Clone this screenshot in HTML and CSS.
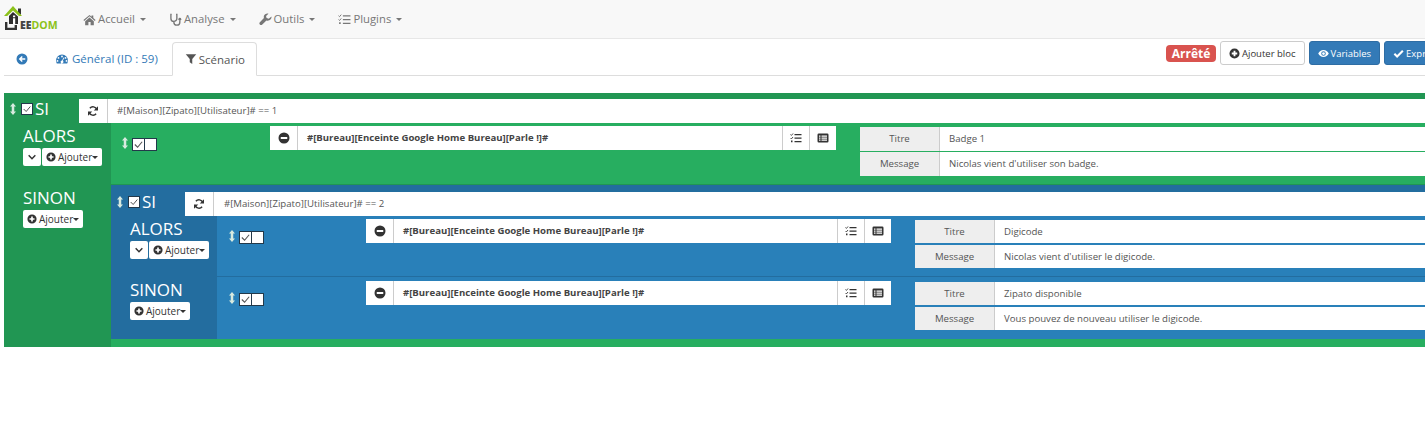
FILE: index.html
```html
<!DOCTYPE html>
<html>
<head>
	<meta charset="UTF-8">
	<title>Scénario</title>
	<link rel="stylesheet" href="styles.css">
</head>
<body>
<svg class="defs" width="0" height="0">
	<symbol id="i-home" viewBox="0 0 24 24"><path d="M12 3.500 .8 13l1.400 1.600L12 6.200l9.800 8.400 1.400-1.600L19 9.400V4.500h-3.200v2.200zM4 15v7.500h6v-6h4v6h6V15L12 8.200z"/></symbol>
	<symbol id="i-steth" viewBox="0 0 24 24"><path d="M5 2.500H3.500V10a5.500 5.500 0 0 0 11 0V2.500H13M9 15.500V17a5.500 5.500 0 0 0 11 0v-3" fill="none" stroke="currentColor" stroke-width="2.500"/><circle cx="20" cy="11.500" r="2.600"/></symbol>
	<symbol id="i-wrench" viewBox="0 0 24 24"><path d="M23 6.500 18 10.500l-4-1.200L13 5.500 17.500 1.200C14 .3 10 2 9 5.500c-.4 1.400-.3 2.700.1 3.900L1.600 17c-1.200 1.200-1.200 3.200 0 4.400 1.200 1.300 3.200 1.300 4.500 0l7.600-7.600c1.300.4 2.700.5 4 .1 3.500-1 6.200-4.300 5.300-7.400z"/></symbol>
	<symbol id="i-tasks" viewBox="0 0 24 24"><path d="M9 4h14v2.500H9zM9 11h14v2.500H9zM9 18h14v2.500H9z"/><path d="M1 5l1.800 1.800L6 3M1 12l1.800 1.800L6 10" fill="none" stroke="currentColor" stroke-width="1.800"/><path d="M2 17h3v3.500H2z"/></symbol>
	<symbol id="i-back" viewBox="0 0 24 24"><path fill-rule="evenodd" d="M12 1a11 11 0 1 0 0 22 11 11 0 0 0 0-22zM5.500 12l6-6 2 2-2.500 2.500h7.500v3H11l2.500 2.500-2 2z"/></symbol>
	<symbol id="i-gauge" viewBox="0 0 24 24"><path fill-rule="evenodd" d="M12 3A12 12 0 0 0 0 15c0 2.200.6 4.300 1.600 6h20.800c1-1.700 1.600-3.800 1.600-6A12 12 0 0 0 12 3zM12 5.200a1.800 1.800 0 1 1 0 3.600 1.800 1.800 0 0 1 0-3.600zM5 8a1.800 1.800 0 1 1 0 3.600A1.800 1.800 0 0 1 5 8zm14 0a1.800 1.800 0 1 1 0 3.600A1.800 1.800 0 0 1 19 8zM3 14a1.800 1.800 0 1 1 0 3.600A1.800 1.800 0 0 1 3 14zm18 0a1.800 1.800 0 1 1 0 3.600 1.800 1.800 0 0 1 0-3.600zM15 9l1.500.6-2.700 6.100a2.800 2.800 0 1 1-1.600-.6z"/></symbol>
	<symbol id="i-filter" viewBox="0 0 24 24"><path d="M1.500 2.500h21L14.500 12v10l-5-3.500V12z"/></symbol>
	<symbol id="i-plus" viewBox="0 0 24 24"><path fill-rule="evenodd" d="M12 1a11 11 0 1 0 0 22 11 11 0 0 0 0-22zM10 6h4v4h4v4h-4v4h-4v-4H6v-4h4z"/></symbol>
	<symbol id="i-minus" viewBox="0 0 24 24"><path fill-rule="evenodd" d="M12 1a11 11 0 1 0 0 22 11 11 0 0 0 0-22zM5.500 10h13v4h-13z"/></symbol>
	<symbol id="i-eye" viewBox="0 0 24 24"><path fill-rule="evenodd" d="M12 4.500C7 4.500 3 7.500.5 12 3 16.500 7 19.500 12 19.500s9-3 11.500-7.500C21 7.500 17 4.500 12 4.500zM12 7a5 5 0 1 1 0 10 5 5 0 0 1 0-10z"/><circle cx="12" cy="12" r="3"/></symbol>
	<symbol id="i-check" viewBox="0 0 24 24"><path d="M3 12.500l6 6L21.500 6" fill="none" stroke="currentColor" stroke-width="4.500"/></symbol>
	<symbol id="i-tick" viewBox="0 0 24 24"><path d="M4 12l6 6L20 6" fill="none" stroke="currentColor" stroke-width="2.400"/></symbol>
	<symbol id="i-refresh" viewBox="0 0 24 24"><path d="M19.500 9A8 8 0 0 0 5.800 6.500M4.500 15a8 8 0 0 0 13.700 2.500" fill="none" stroke="currentColor" stroke-width="3"/><path d="M22 2.500V11h-8.500zM2 21.500V13h8.500z"/></symbol>
	<symbol id="i-chevron" viewBox="0 0 24 24"><path d="M4 8l8 8 8-8" fill="none" stroke="currentColor" stroke-width="3.600"/></symbol>
	<symbol id="i-updown" viewBox="0 0 12 24"><path d="M6 0l6 7H8.500v10H12l-6 7-6-7h3.500V7H0z"/></symbol>
	<symbol id="i-list" viewBox="0 0 24 24"><path fill-rule="evenodd" d="M3.500 3h17A2.500 2.500 0 0 1 23 5.500v13a2.500 2.500 0 0 1-2.500 2.500h-17A2.500 2.500 0 0 1 1 18.500v-13A2.500 2.500 0 0 1 3.500 3zM4 7v2.500h3V7zm5 0v2.500h11V7zm-5 4v2.500h3V11zm5 0v2.500h11V11zm-5 4v2.500h3V15zm5 0v2.500h11V15z"/></symbol>
</svg>

<nav class="navbar">
	<a class="logo">
		<svg class="logo-house" viewBox="0 0 20 24">
			<path d="M14 2.500h3v6h-3z" fill="#333"/>
			<path d="M9 0 0 10h3.200L9 4.500l6 5.500h3z" fill="#8cc21a"/>
			<path d="M5 10 9 6l5 4.500V18H5z" fill="#2e2e2e"/>
			<path d="M9 9.500h2.200v1.800H9zM9 12.300h2.200v6H9z" fill="#fff"/>
			<path d="M1 16h2.400v5.800h7.200V19H13v5H1z" fill="#333"/>
		</svg>
		<span class="logo-text"><b>EE</b>DOM</span>
	</a>
	<a class="nav-item"><svg class="ico"><use href="#i-home"/></svg>Accueil<i class="caret"></i></a>
	<a class="nav-item"><svg class="ico"><use href="#i-steth"/></svg>Analyse<i class="caret"></i></a>
	<a class="nav-item"><svg class="ico"><use href="#i-wrench"/></svg>Outils<i class="caret"></i></a>
	<a class="nav-item"><svg class="ico"><use href="#i-tasks"/></svg>Plugins<i class="caret"></i></a>
</nav>

<div class="tabs">
	<a class="tab tab-back"><svg class="ico"><use href="#i-back"/></svg></a>
	<a class="tab"><svg class="ico"><use href="#i-gauge"/></svg>Général (ID : 59)</a>
	<a class="tab active"><svg class="ico"><use href="#i-filter"/></svg>Scénario</a>
	<div class="actions">
		<span class="badge">Arrêté</span>
		<a class="btn"><svg class="ico"><use href="#i-plus"/></svg>Ajouter bloc</a>
		<a class="btn btn-blue"><svg class="ico"><use href="#i-eye"/></svg>Variables</a>
		<a class="btn btn-blue"><svg class="ico"><use href="#i-check"/></svg>Expressions</a>
	</div>
</div>

<div class="scenario">
	<div class="block green">
		<div class="si-row">
			<div class="si-label">
				<svg class="updown"><use href="#i-updown"/></svg>
				<span class="cb on"><svg><use href="#i-tick"/></svg></span>
				<span class="si-txt">SI</span>
			</div>
			<a class="refresh"><svg class="ico"><use href="#i-refresh"/></svg></a>
			<div class="field">#[Maison][Zipato][Utilisateur]# == 1</div>
		</div>

		<div class="branch">
			<div class="branch-label">
				<div class="branch-name">ALORS</div>
				<div class="branch-btns">
					<a class="mini mini-toggle"><svg class="ico"><use href="#i-chevron"/></svg></a>
					<a class="mini"><svg class="ico"><use href="#i-plus"/></svg>Ajouter<i class="caret"></i></a>
				</div>
			</div>
			<div class="branch-body">
				<div class="action first">
					<div class="handle">
						<svg class="updown"><use href="#i-updown"/></svg>
						<span class="cb on"><svg><use href="#i-tick"/></svg></span><span class="cb"></span>
					</div>
					<div class="cmd">
						<a class="cmd-btn"><svg class="ico"><use href="#i-minus"/></svg></a>
						<div class="cmd-name">#[Bureau][Enceinte Google Home Bureau][Parle !]#</div>
						<a class="cmd-btn"><svg class="ico"><use href="#i-tasks"/></svg></a>
						<a class="cmd-btn"><svg class="ico"><use href="#i-list"/></svg></a>
					</div>
					<div class="params">
						<div class="param"><span class="param-key">Titre</span><span class="param-val">Badge 1</span></div>
						<div class="param"><span class="param-key">Message</span><span class="param-val">Nicolas vient d'utiliser son badge.</span></div>
					</div>
				</div>
			</div>
		</div>

		<div class="branch">
			<div class="branch-label">
				<div class="branch-name">SINON</div>
				<div class="branch-btns">
					<a class="mini"><svg class="ico"><use href="#i-plus"/></svg>Ajouter<i class="caret"></i></a>
				</div>
			</div>
			<div class="branch-body">
				<div class="block blue">
					<div class="si-row">
						<div class="si-label">
							<svg class="updown"><use href="#i-updown"/></svg>
							<span class="cb on"><svg><use href="#i-tick"/></svg></span>
							<span class="si-txt">SI</span>
						</div>
						<a class="refresh"><svg class="ico"><use href="#i-refresh"/></svg></a>
						<div class="field">#[Maison][Zipato][Utilisateur]# == 2</div>
					</div>

					<div class="branch">
						<div class="branch-label">
							<div class="branch-name">ALORS</div>
							<div class="branch-btns">
								<a class="mini mini-toggle"><svg class="ico"><use href="#i-chevron"/></svg></a>
								<a class="mini"><svg class="ico"><use href="#i-plus"/></svg>Ajouter<i class="caret"></i></a>
							</div>
						</div>
						<div class="branch-body">
							<div class="action">
								<div class="handle">
									<svg class="updown"><use href="#i-updown"/></svg>
									<span class="cb on"><svg><use href="#i-tick"/></svg></span><span class="cb"></span>
								</div>
								<div class="cmd">
									<a class="cmd-btn"><svg class="ico"><use href="#i-minus"/></svg></a>
									<div class="cmd-name">#[Bureau][Enceinte Google Home Bureau][Parle !]#</div>
									<a class="cmd-btn"><svg class="ico"><use href="#i-tasks"/></svg></a>
									<a class="cmd-btn"><svg class="ico"><use href="#i-list"/></svg></a>
								</div>
								<div class="params">
									<div class="param"><span class="param-key">Titre</span><span class="param-val">Digicode</span></div>
									<div class="param"><span class="param-key">Message</span><span class="param-val">Nicolas vient d'utiliser le digicode.</span></div>
								</div>
							</div>
						</div>
					</div>

					<div class="branch">
						<div class="branch-label">
							<div class="branch-name">SINON</div>
							<div class="branch-btns">
								<a class="mini"><svg class="ico"><use href="#i-plus"/></svg>Ajouter<i class="caret"></i></a>
							</div>
						</div>
						<div class="branch-body">
							<div class="action last">
								<div class="handle">
									<svg class="updown"><use href="#i-updown"/></svg>
									<span class="cb on"><svg><use href="#i-tick"/></svg></span><span class="cb"></span>
								</div>
								<div class="cmd">
									<a class="cmd-btn"><svg class="ico"><use href="#i-minus"/></svg></a>
									<div class="cmd-name">#[Bureau][Enceinte Google Home Bureau][Parle !]#</div>
									<a class="cmd-btn"><svg class="ico"><use href="#i-tasks"/></svg></a>
									<a class="cmd-btn"><svg class="ico"><use href="#i-list"/></svg></a>
								</div>
								<div class="params">
									<div class="param"><span class="param-key">Titre</span><span class="param-val">Zipato disponible</span></div>
									<div class="param"><span class="param-key">Message</span><span class="param-val">Vous pouvez de nouveau utiliser le digicode.</span></div>
								</div>
							</div>
						</div>
					</div>
				</div>
			</div>
		</div>
	</div>
</div>
</body>
</html>
```

FILE: styles.css
```css
*{margin:0;padding:0;box-sizing:border-box;}
html,body{height:100%;overflow:hidden;}
body{
	background:#fff;
	font-family:"Open Sans",sans-serif;
	font-size:12px;
	color:#555;
}
.defs{position:absolute;}

.ico{width:12px;height:12px;fill:currentColor;flex:none;}
.caret{
	display:inline-block;
	width:0;height:0;
	border-top:3px solid currentColor;
	border-left:3px solid transparent;
	border-right:3px solid transparent;
}

/* barre du haut */
.navbar{
	display:flex;
	align-items:center;
	gap:23px;
	height:39px;
	background:#f8f8f8;
	border-bottom:1px solid #e7e7e7;
}
.logo{display:flex;align-items:flex-end;width:60px;height:24px;margin-top:-2px;padding-left:4px;}
.logo-house{width:20px;height:24px;flex:none;}
.logo-text{font-size:10.500px;font-weight:700;color:#8cc21a;line-height:10px;margin-left:-4px;}
.logo-text b{color:#444;}
.nav-item{display:flex;align-items:center;color:#777;font-size:11.300px;line-height:18px;}
.nav-item .ico{width:13px;height:13px;margin-right:2px;}
.nav-item .caret{margin-left:5px;}

/* onglets */
.tabs{
	display:flex;
	align-items:flex-end;
	height:37px;
	margin-left:4px;
	border-bottom:1px solid #ddd;
}
.tab{
	display:flex;
	align-items:center;
	height:33px;
	padding:0 14px 0 15px;
	font-size:11.500px;
	color:#337ab7;
}
.tab .ico{margin-right:4px;}
.tab-back{padding:0 12px;margin-right:1px;}
.tab-back .ico{margin:0;}
.tab.active{
	color:#555;
	background:#fff;
	border:1px solid #ddd;
	border-bottom:1px solid #fff;
	border-radius:4px 4px 0 0;
	margin-bottom:-1px;
	height:34px;
	padding:0 11px 0 12px;
}
.tab.active .ico{margin-right:2px;}
.actions{
	display:flex;
	align-items:flex-start;
	gap:4px;
	margin-left:auto;
	height:34px;
	width:259px;
	flex:none;
	overflow:hidden;
}
.badge{
	background:#d9534f;
	color:#fff;
	font-weight:700;
	font-size:12px;
	line-height:17px;
	width:50px;
	text-align:center;
	height:17px;
	border-radius:4px;
	margin-top:4px;
	flex:none;
}
.btn{
	display:flex;
	align-items:center;
	gap:2px;
	flex:none;
	height:24px;
	padding:0 8px;
	font-size:9.500px;
	color:#333;
	background:#fff;
	border:1px solid #ccc;
	border-radius:3px;
}
.btn .ico{width:11px;height:11px;}
.btn-blue{background:#337ab7;border-color:#2e6da4;color:#fff;}

/* blocs */
.scenario{margin:17px 0 0 4px;width:1421px;overflow:hidden;}
.green{--dark:#219653;--light:#27ae60;}
.blue{--dark:#236d9f;--light:#2980b9;}
.block{background:var(--dark);color:#fff;}
.si-row{display:flex;align-items:flex-start;height:30px;padding-top:6px;}
.blue > .si-row{height:31px;padding-top:7px;}
.si-label{display:flex;align-items:center;width:75px;height:20px;padding-left:6px;flex:none;}
.blue > .si-row .si-label{width:74px;}
.si-txt{font-size:17px;line-height:20px;margin-left:2px;}
.updown{width:6px;height:12px;fill:#d8eadf;flex:none;margin-right:5px;}
.cb{
	display:inline-block;
	width:13px;height:13px;
	background:#fff;
	border:1px solid #23394a;
	flex:none;
}
.si-label .cb{width:12px;height:12px;}
.cb svg{display:block;width:100%;height:100%;color:#555;}
.refresh{
	display:flex;
	align-items:center;
	justify-content:center;
	width:29px;height:24px;
	background:#fff;
	color:#333;
	border-right:1px solid #ccc;
	flex:none;
}
.field{
	flex:1;
	height:24px;
	line-height:24px;
	padding-left:9px;
	background:#fff;
	color:#555;
	font-size:9.650px;
}
.blue > .si-row .field{padding-left:10px;}

.branch{display:flex;}
.branch-label{width:107px;padding:1px 0 0 19px;flex:none;}
.blue .branch-label{width:106px;}
.branch-name{font-size:17px;line-height:24px;}
.branch-btns{display:flex;gap:1px;}
.mini{
	display:flex;
	align-items:center;
	height:18px;
	padding:0 4px;
	background:#fff;
	color:#333;
	font-size:10px;
	border-radius:2px;
}
.mini .ico{width:10px;height:10px;margin-right:2px;}
.mini-toggle{width:18px;padding:0;justify-content:center;}
.mini-toggle .ico{margin:0;}
.mini .caret{margin-left:0;}
.branch-body{flex:1;min-width:0;background:var(--light);}
.branch-body > .block{margin-bottom:8px;}

.action{display:flex;align-items:flex-start;height:61px;padding-top:3px;border-bottom:1px solid var(--dark);}
.action.first{height:62px;}
.action.last{height:62px;padding-top:4px;border-bottom:none;}
.handle{display:flex;align-items:flex-start;width:149px;padding:11px 0 0 12px;flex:none;}
.handle .updown{margin-right:4px;}
.handle .cb{margin-top:1px;}
.cb + .cb{border-left:none;width:12px;}
.cmd{display:flex;width:525px;height:24px;background:#fff;color:#444;flex:none;margin-right:24px;}
.cmd-btn{
	display:flex;
	align-items:center;
	justify-content:center;
	width:27px;
	color:#333;
	border-left:1px solid #ccc;
	flex:none;
}
.cmd-btn:first-child{border-left:none;}
.cmd-name{
	flex:1;
	line-height:24px;
	padding-left:9px;
	font-size:9.600px;
	font-weight:700;
	border-left:1px solid #ccc;
}
.action.first .handle{width:159px;padding-left:11px;}
.action.first .cmd{width:566px;}
.params{flex:1;display:flex;flex-direction:column;gap:2px;margin-top:1px;}
.param{display:flex;height:23px;background:#fff;}
.action.first .params{gap:1px;}
.action.first .param{height:24px;}
.param-key{
	display:block;
	width:80px;
	text-align:center;
	line-height:23px;
	background:#eee;
	color:#555;
	font-size:9.650px;
	border-right:1px solid #ccc;
	flex:none;
}
.param-val{
	line-height:23px;
	padding-left:9px;
	color:#555;
	font-size:9.650px;
}
.action.first .param-key,.action.first .param-val{line-height:24px;}
```
